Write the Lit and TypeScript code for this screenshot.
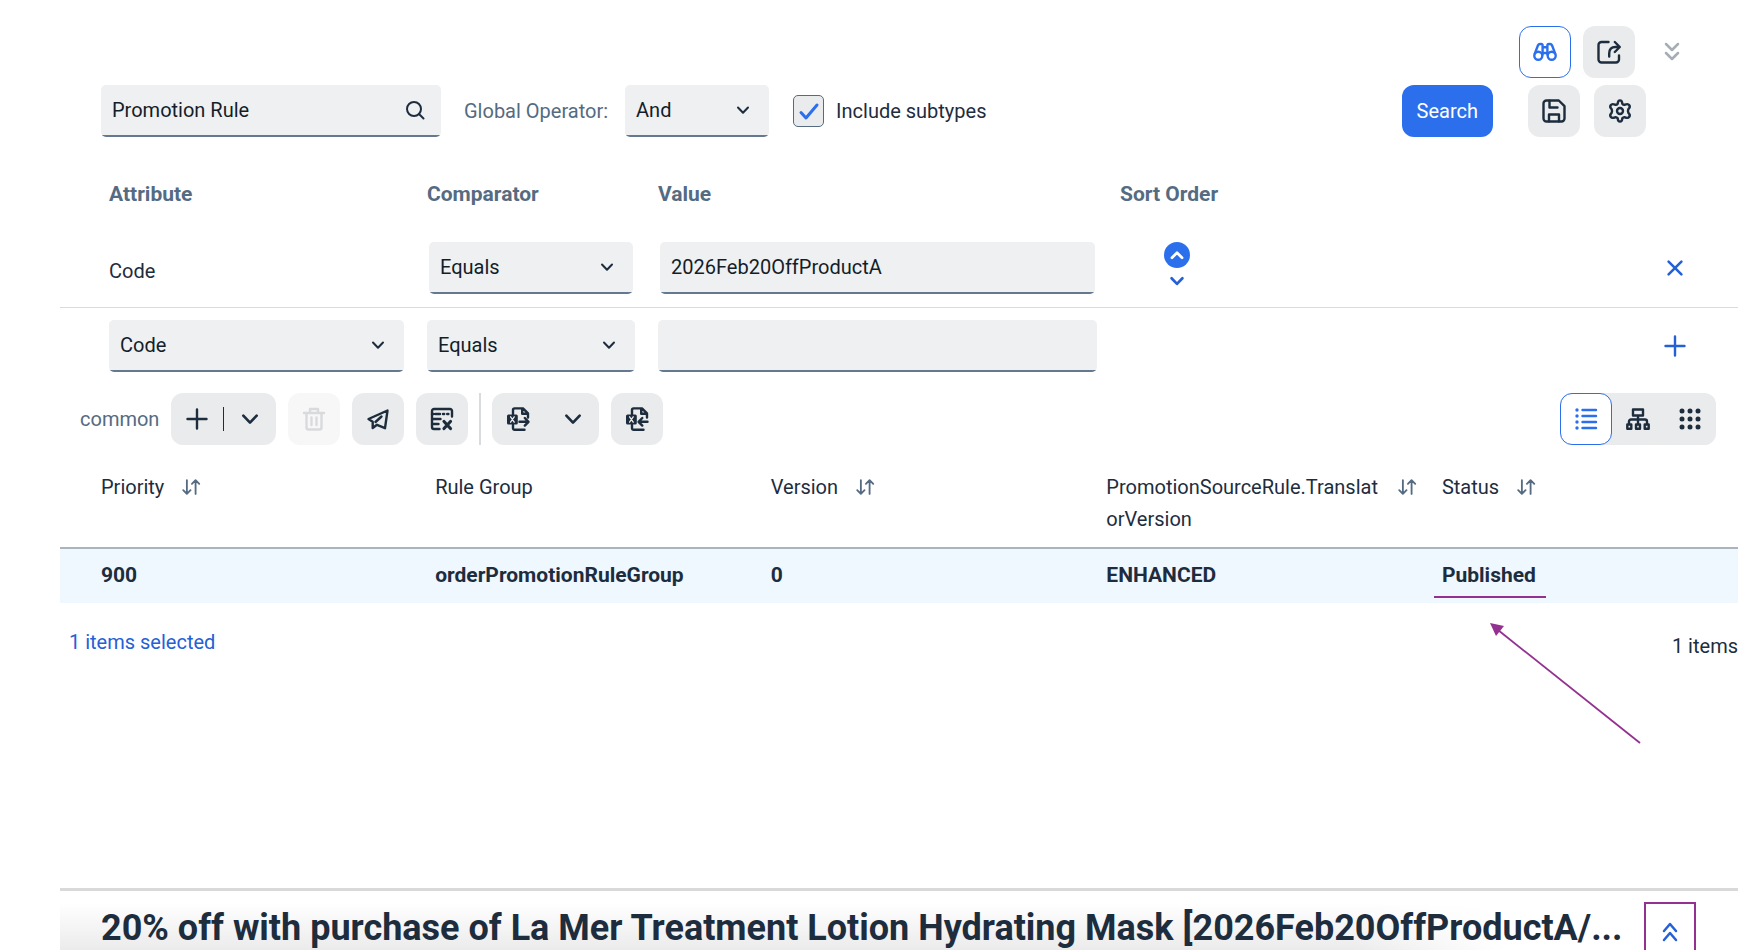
import { LitElement, html, css, svg, nothing } from 'lit';
import { customElement, property } from 'lit/decorators.js';
import { classMap } from 'lit/directives/class-map.js';

const excelSheet = svg`
  <path d="M7 7.500V3a1.600 1.600 0 0 1 1.600-1.600H17L22 6.400v4.200M16.200 1.600V6.800H22M7 17.800v3.400A1.600 1.600 0 0 0 8.600 22.800H18.500"/>
  <rect x="1" y="7.400" width="10.800" height="10.200" rx="1.500" fill="currentColor" stroke="none"/>
  <path d="M4.600 9.800l3.600 5.400M8.200 9.800l-3.600 5.400" stroke="#eaebec" stroke-width="1.300"/>`;

const icons: Record<string, unknown> = {
  search: svg`<circle cx="11" cy="11" r="7"/><path d="M16 16l4.500 4.500"/>`,
  chevron: svg`<path d="M7 9.500l5 5.200 5-5.200"/>`,
  chevronUp: svg`<path d="M6.500 15l5.500-5.500L17.500 15"/>`,
  chevronsDown: svg`<path d="M6 4l6 6 6-6M6 13l6 6 6-6"/>`,
  chevronsUp: svg`<path d="M6 11l6-7 6 7M6 20l6-7 6 7"/>`,
  close: svg`<path d="M5 5l14 14M19 5l-14 14"/>`,
  plus: svg`<path d="M12 2.500v19M2.500 12h19"/>`,
  binoculars: svg`
    <circle cx="5.300" cy="15.800" r="4"/><circle cx="18.700" cy="15.800" r="4"/>
    <path d="M1.800 13.600L5 5.300Q5.600 4 7 4h1.200Q9.600 4 9.600 5.500V14.500M22.200 13.600L19 5.300Q18.400 4 17 4h-1.200Q14.400 4 14.400 5.500V14.500M9.600 7.200h4.800M9.400 13h5.200"/>`,
  share: svg`
    <path d="M11.500 2H4.500A3 3 0 0 0 1.500 5V19.500a3 3 0 0 0 3 3H19a3 3 0 0 0 3-3V15.500"/>
    <path d="M12.200 16.500V13.500Q12.200 7 18.500 7H22M17.800 2l5 5-5 5"/>`,
  save: svg`
    <path d="M4.500 1.500H16.800L22.500 7.200V19.500a3 3 0 0 1-3 3H4.500a3 3 0 0 1-3-3V4.500a3 3 0 0 1 3-3z"/>
    <path d="M7.500 1.800V8.500H15.500M7 22.300V15.500H17V22.300"/>`,
  gear: svg`
    <path d="M9.700 4.700Q10 1.400 12 1.400t2.300 3.300q1 1.300 2.600 1Q20 4.400 21.300 6.200t-.9 3.900q-.9 1.900 0 3.800 2.200 2.100.9 3.900t-4.400.5q-1.600-.3-2.600 1Q14 22.600 12 22.600t-2.300-3.300q-1-1.300-2.600-1Q4 19.600 2.700 17.800t.9-3.900q.9-1.900 0-3.800Q1.400 8 2.700 6.200t4.400-.5q1.600.3 2.600-1z"/>
    <circle cx="12" cy="12" r="3"/>`,
  trash: svg`<path d="M2 6h20M8 5.500V2h8V5.500M4.500 6.500V20.500a2 2 0 0 0 2 2h11a2 2 0 0 0 2-2V6.500M9.500 10.500v7.500M14.500 10.500v7.500"/>`,
  plane: svg`<path d="M21.500 3.500L2.500 12l4.200 2.800V21l4.300-3.200 8 3.400zM9.500 15l6-5.500"/>`,
  tableX: svg`
    <path d="M22 9.500V4A2 2 0 0 0 20 2H4A2 2 0 0 0 2 4V20a2 2 0 0 0 2 2H9.500M2 12H10.500M2 17H8.500" />
    <path d="M5.500 7H10M13 7h1.200M17.200 7h1.200M2 7h1.500"/><path d="M14 14.500l6.500 7M20.500 14.500l-6.500 7" stroke-width="3.200"/>`,
  excelOut: svg`${excelSheet}<path d="M13.500 14.800H22.300M18.800 11l3.700 3.800-3.700 3.800"/>`,
  excelIn: svg`${excelSheet}<path d="M22.500 14.800H13.800M17.300 11l-3.700 3.800 3.700 3.800"/>`,
  list: svg`
    <path d="M8.500 3H22M8.500 9H22M8.500 15H22M8.500 21H22"/>
    <g fill="currentColor" stroke="none"><circle cx="3" cy="3" r="1.700"/><circle cx="3" cy="9" r="1.700"/><circle cx="3" cy="15" r="1.700"/><circle cx="3" cy="21" r="1.700"/></g>`,
  tree: svg`
    <path d="M7 2.500H17V8.500H7zM12 8.500V17M3 17V14.500a2 2 0 0 1 2-2H19a2 2 0 0 1 2 2V17"/>
    <path d="M1.300 17.500H5.300V21.700H1.300zM10 17.500H14V21.700H10zM18.700 17.500H22.700V21.700H18.700z"/>`,
  grid: svg`<g fill="currentColor" stroke="none">${[4, 12, 20].map((y) =>
    [4, 12, 20].map((x) => svg`<circle cx=${x} cy=${y} r="2.500"/>`))}</g>`,
  sort: svg`<path d="M7.500 4.500V19M3.500 15.500l4 4 4-4M17 19.500V5M13 8.500l4-4 4 4"/>`,
};

@customElement('ui-icon')
export class UiIcon extends LitElement {
  @property() name = '';
  @property({ type: Number }) size = 24;
  @property({ type: Number }) stroke = 2.4;
  static styles = css`
    :host { display: inline-flex; flex: none; }
    .glyph { display: block; overflow: visible; fill: none; stroke: currentColor; stroke-linecap: round; stroke-linejoin: round; }
  `;
  render() {
    return html`<svg class="glyph" viewBox="0 0 24 24" width=${this.size} height=${this.size}
      stroke-width=${this.stroke} aria-hidden="true">${icons[this.name]}</svg>`;
  }
}

interface Column { label: string; value: string; sortable: boolean; marked?: boolean }

const columns: Column[] = [
  { label: 'Priority', value: '900', sortable: true },
  { label: 'Rule Group', value: 'orderPromotionRuleGroup', sortable: false },
  { label: 'Version', value: '0', sortable: true },
  { label: 'PromotionSourceRule.TranslatorVersion', value: 'ENHANCED', sortable: true },
  { label: 'Status', value: 'Published', sortable: true, marked: true },
];

@customElement('app-root')
export class AppRoot extends LitElement {
  static styles = css`
    :host {
      display: flex; flex-direction: column; box-sizing: border-box;
      height: 100vh; overflow: hidden; padding-left: 60px;
      background: #fff; color: #1d2d3e;
      font: 400 20px/24px Roboto, "Liberation Sans", sans-serif;
    }
    *, *::before, *::after { box-sizing: border-box; }
    button, input, select { font: inherit; color: inherit; margin: 0; border: 0; }
    button { cursor: pointer; padding: 0; background: none; display: inline-flex; align-items: center; justify-content: center; }

    .btn { min-width: 52px; height: 52px; border-radius: 12px; background: #eaebec; flex: none; }
    .btn.active { background: #fff; border: 1px solid #2c6fed; color: #2c6fed; }
    .btn.primary { background: #2c6fed; color: #fff; padding: 0 15px; }
    .btn:disabled { background: #f7f7f7; color: #d9dadd; cursor: default; }
    .link { color: #2460d6; }

    .topbar { display: flex; justify-content: flex-end; gap: 12px; padding: 26px 52px 7px 0; }
    .collapse { width: 28px; height: 52px; margin-left: 11px; color: #a7adb4; }

    .search { display: flex; align-items: center; padding: 0 92px 0 41px; }
    .field { position: relative; display: block; }
    .control {
      display: block; width: 100%; height: 52px; padding: 0 11px 2px; border-radius: 5px; outline: 0;
      appearance: none; color: #131e29;
      background: linear-gradient(#64798f, #64798f) bottom / 100% 2px no-repeat, #eff0f2;
    }
    .mark { position: absolute; right: 14px; top: 13px; pointer-events: none; display: flex; }
    .type { width: 340px; margin-right: 23px; }
    .operator-label { color: #556b82; margin-right: 17px; }
    .operator { width: 144px; margin-right: 24px; }
    .check { display: flex; align-items: center; gap: 12px; }
    .tick { position: relative; display: flex; color: #2c6fed; }
    .tick input {
      appearance: none; width: 31px; height: 32px; border: 1px solid #556b82; border-radius: 5px; background: #eaebec;
    }
    .tick svg { position: absolute; inset: 0; pointer-events: none; }
    .actions { display: flex; margin-left: auto; gap: 14px; }
    .actions .primary { margin-right: 21px; }

    .criteria { display: flex; flex-direction: column; padding-top: 45px; }
    .line {
      display: grid; grid-template-columns: 295fr 208fr 439fr 511fr 42px; column-gap: 23px;
      align-items: center; padding: 0 42px 0 49px;
    }
    .heads { font-weight: 700; font-size: 21px; color: #556b82; padding-bottom: 36px; }
    .current { padding-bottom: 13px; border-bottom: 1px solid #d9dbde; }
    .current .field { margin: 0 2px; }
    .draft { padding-top: 12px; }
    .name { padding-top: 6px; }
    .order { display: flex; flex-direction: column; align-items: center; align-self: start; gap: 3px; width: 26px; margin-left: 44px; }
    .up { width: 26px; height: 26px; border-radius: 50%; background: #2c6fed; color: #fff; }
    .order .link { height: 20px; }
    .row-action { justify-self: center; }

    .toolbar { display: flex; align-items: center; gap: 12px; padding: 21px 22px 0 20px; }
    .group { color: #556b82; }
    .split { display: flex; border-radius: 12px; background: #eaebec; height: 52px; align-items: center; }
    .split button { width: 52px; height: 52px; }
    .bar { width: 1px; height: 24px; background: #1d2d3e; }
    .rule { width: 2px; height: 52px; margin: 0 -1px; background: #d9dbde; }
    .export { gap: 3px; }
    .views { display: flex; margin-left: auto; border-radius: 12px; background: #eaebec; }

    .results { width: 100%; table-layout: fixed; border-collapse: collapse; text-align: left; }
    .results th { width: 20%; }
    .results th:first-child { width: 22%; }
    .results th:last-child { width: 18%; }
    .results th, .results td { vertical-align: top; padding: 14px 18px 16px 6px; }
    .results th { font-weight: 400; line-height: 32px; padding-top: 26px; padding-bottom: 12px; border-bottom: 2px solid #a9b4be; }
    .results th:first-child, .results td:first-child { padding-left: 41px; }
    .results td { font-weight: 700; font-size: 21px; background: #eff7ff; }
    .head { display: flex; gap: 16px; }
    .head span { overflow-wrap: anywhere; }
    .head button { height: 32px; color: #556b82; flex: none; }
    .marked { position: relative; display: inline-block; }
    .marked::after { content: ""; position: absolute; left: -8px; top: 33px; width: 112px; height: 2px; background: #92318f; }
    .arrow { position: absolute; left: 48px; top: 60px; pointer-events: none; }

    .summary { display: flex; justify-content: space-between; padding: 27px 0 0 9px; white-space: nowrap; overflow: hidden; }
    .summary p { margin: 0; }
    .total { padding-top: 4px; }

    .detail {
      display: flex; justify-content: space-between; margin-top: auto; padding: 11px 42px 0 41px;
      height: 62px; flex: none; overflow: hidden; border-top: 3px solid #d9d9d9;
      background: linear-gradient(to right, #fff0 77%, #fff 86%), linear-gradient(#fff 20%, #ebebeb);
    }
    .title { margin: 0; padding-top: 4px; font-size: 36px; line-height: 44px; font-weight: 700; white-space: nowrap; overflow: hidden; text-overflow: ellipsis; }
    .expand { width: 52px; height: 60px; flex: none; background: #fff; border: 2px solid #92318f; color: #2460d6; }
  `;

  private select(label: string, value: string) {
    return html`<label class="field">
      <select class="control" aria-label=${label}><option>${value}</option></select>
      <span class="mark"><ui-icon name="chevron" stroke="2"></ui-icon></span>
    </label>`;
  }

  private tool(icon: string, label: string, opts: { active?: boolean; disabled?: boolean } = {}) {
    return html`<button class=${classMap({ btn: true, active: !!opts.active })} aria-label=${label} ?disabled=${opts.disabled ?? false}>
      <ui-icon name=${icon}></ui-icon>
    </button>`;
  }

  private cell(c: Column) {
    if (!c.marked) return c.value;
    return html`<span class="marked">${c.value}
      <svg class="arrow" width="152" height="122" viewBox="0 0 152 122" aria-hidden="true">
        <path d="M8 7L150 120" stroke="#92318f" stroke-width="1.800"/>
        <path d="M0 0L14 3L6 13z" fill="#92318f"/>
      </svg></span>`;
  }

  render() {
    return html`
      <div class="topbar">
        ${this.tool('binoculars', 'Advanced search', { active: true })}
        ${this.tool('share', 'Open')}
        <button class="collapse" aria-label="Collapse"><ui-icon name="chevronsDown" stroke="2.500"></ui-icon></button>
      </div>

      <div class="search">
        <label class="field type">
          <input class="control" aria-label="Type" .value=${'Promotion Rule'}>
          <span class="mark"><ui-icon name="search" stroke="2"></ui-icon></span>
        </label>
        <label class="operator-label" for="operator">Global Operator:</label>
        <span class="field operator">
          <select class="control" id="operator"><option>And</option></select>
          <span class="mark"><ui-icon name="chevron" stroke="2"></ui-icon></span>
        </span>
        <label class="check">
          <span class="tick">
            <input type="checkbox" checked>
            <svg width="31" height="32" viewBox="0 0 31 32" fill="none" stroke="currentColor" stroke-width="3" stroke-linecap="round" stroke-linejoin="round" aria-hidden="true"><path d="M8 17.500l5 5.500L24 10"/></svg>
          </span>
          Include subtypes
        </label>
        <div class="actions">
          <button class="btn primary">Search</button>
          ${this.tool('save', 'Save query')}
          ${this.tool('gear', 'Settings')}
        </div>
      </div>

      <div class="criteria">
        <div class="line heads"><span>Attribute</span><span>Comparator</span><span>Value</span><span>Sort Order</span></div>
        <div class="line current">
          <span class="name">Code</span>
          ${this.select('Comparator', 'Equals')}
          <label class="field"><input class="control" aria-label="Value" .value=${'2026Feb20OffProductA'}></label>
          <div class="order">
            <button class="up" aria-label="Ascending"><ui-icon name="chevronUp" size="22" stroke="3"></ui-icon></button>
            <button class="link" aria-label="Descending"><ui-icon name="chevron" size="26" stroke="2.500"></ui-icon></button>
          </div>
          <button class="row-action link" aria-label="Remove"><ui-icon name="close" size="22" stroke="2.800"></ui-icon></button>
        </div>
        <div class="line draft">
          ${this.select('Attribute', 'Code')}
          ${this.select('Comparator', 'Equals')}
          <label class="field"><input class="control" aria-label="Value"></label>
          <span></span>
          <button class="row-action link" aria-label="Add"><ui-icon name="plus"></ui-icon></button>
        </div>
      </div>

      <div class="toolbar">
        <span class="group">common</span>
        <div class="split">
          <button aria-label="Create"><ui-icon name="plus"></ui-icon></button>
          <span class="bar"></span>
          <button aria-label="Create options"><ui-icon name="chevron" size="32" stroke="2"></ui-icon></button>
        </div>
        ${this.tool('trash', 'Delete', { disabled: true })}
        ${this.tool('plane', 'Send')}
        ${this.tool('tableX', 'Clear table')}
        <span class="rule"></span>
        <div class="split export">
          <button aria-label="Export"><ui-icon name="excelOut"></ui-icon></button>
          <button aria-label="Export options"><ui-icon name="chevron" size="32" stroke="2"></ui-icon></button>
        </div>
        ${this.tool('excelIn', 'Import')}
        <div class="views">
          ${this.tool('list', 'List view', { active: true })}
          ${this.tool('tree', 'Tree view')}
          ${this.tool('grid', 'Grid view')}
        </div>
      </div>

      <table class="results">
        <thead><tr>${columns.map((c) => html`<th scope="col"><div class="head"><span>${c.label}</span>${c.sortable
          ? html`<button aria-label="Sort by ${c.label}"><ui-icon name="sort" size="22" stroke="2"></ui-icon></button>` : nothing}</div></th>`)}</tr></thead>
        <tbody><tr>${columns.map((c) => html`<td>${this.cell(c)}</td>`)}</tr></tbody>
      </table>

      <div class="summary"><p class="link">1 items selected</p><p class="total">1 items</p></div>

      <div class="detail">
        <h1 class="title">20% off with purchase of La Mer Treatment Lotion Hydrating Mask [2026Feb20OffProductA/...</h1>
        <button class="expand" aria-label="Expand"><ui-icon name="chevronsUp" stroke="2.500"></ui-icon></button>
      </div>
    `;
  }
}
